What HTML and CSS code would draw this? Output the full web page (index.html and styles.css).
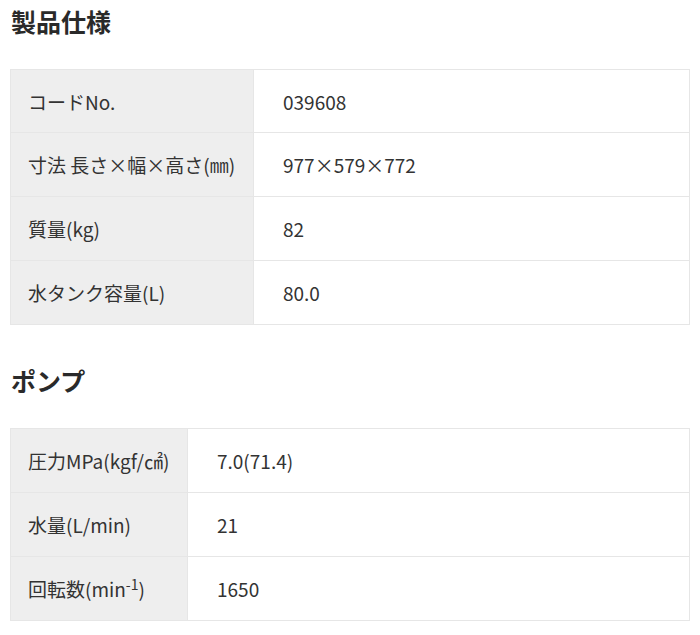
FILE: index.html
```html
<!DOCTYPE html>
<html lang="ja">
<head>
<meta charset="utf-8">
<link rel="stylesheet" href="styles.css">
</head>
<body>
<section class="spec">
  <h2 class="spec-title">製品仕様</h2>
  <table class="spec-table spec-table--wide">
    <tr><th>コードNo.</th><td>039608</td></tr>
    <tr><th>寸法 長さ×幅×高さ(㎜)</th><td>977×579×772</td></tr>
    <tr><th>質量(kg)</th><td>82</td></tr>
    <tr><th>水タンク容量(L)</th><td>80.0</td></tr>
  </table>
</section>
<section class="spec">
  <h2 class="spec-title">ポンプ</h2>
  <table class="spec-table spec-table--narrow">
    <tr><th>圧力MPa(kgf/㎠)</th><td>7.0(71.4)</td></tr>
    <tr><th>水量(L/min)</th><td>21</td></tr>
    <tr><th>回転数(min<sup>-1</sup>)</th><td>1650</td></tr>
  </table>
</section>
</body>
</html>
```
FILE: styles.css
```css
html, body {
  margin: 0;
  padding: 0;
  background: #fff;
}
body {
  padding: 0 10px 0 10px;
  font-family: "Noto Sans CJK JP", "Noto Sans", sans-serif;
  color: #333;
}
.spec-title {
  margin: 0;
  font-size: 25px;
  font-weight: 700;
  line-height: 1;
  padding-top: 9px;
  padding-left: 1px;
  color: #2a2a2a;
}
.spec + .spec .spec-title {
  padding-top: 43px;
}
.spec-table {
  width: 100%;
  border-collapse: collapse;
  margin-top: 35px;
  font-size: 19px;
}
.spec-table th,
.spec-table td {
  border: 1px solid #e6e6e6;
  height: 64px;
  padding: 0;
  vertical-align: middle;
  text-align: left;
  font-weight: 400;
  box-sizing: border-box;
}
.spec-table--wide tr:first-child th,
.spec-table--wide tr:first-child td {
  height: 63px;
}
.spec-table th {
  background: #eeeeee;
  padding-left: 17px;
  color: #333;
}
.spec-table td {
  padding-left: 29px;
  background: #fff;
}
.spec-table--wide th { width: 243px; }
.spec-table--narrow th { width: 177px; }
.spec-table sup {
  font-size: 14px;
  line-height: 0;
  vertical-align: 7px;
}
```
